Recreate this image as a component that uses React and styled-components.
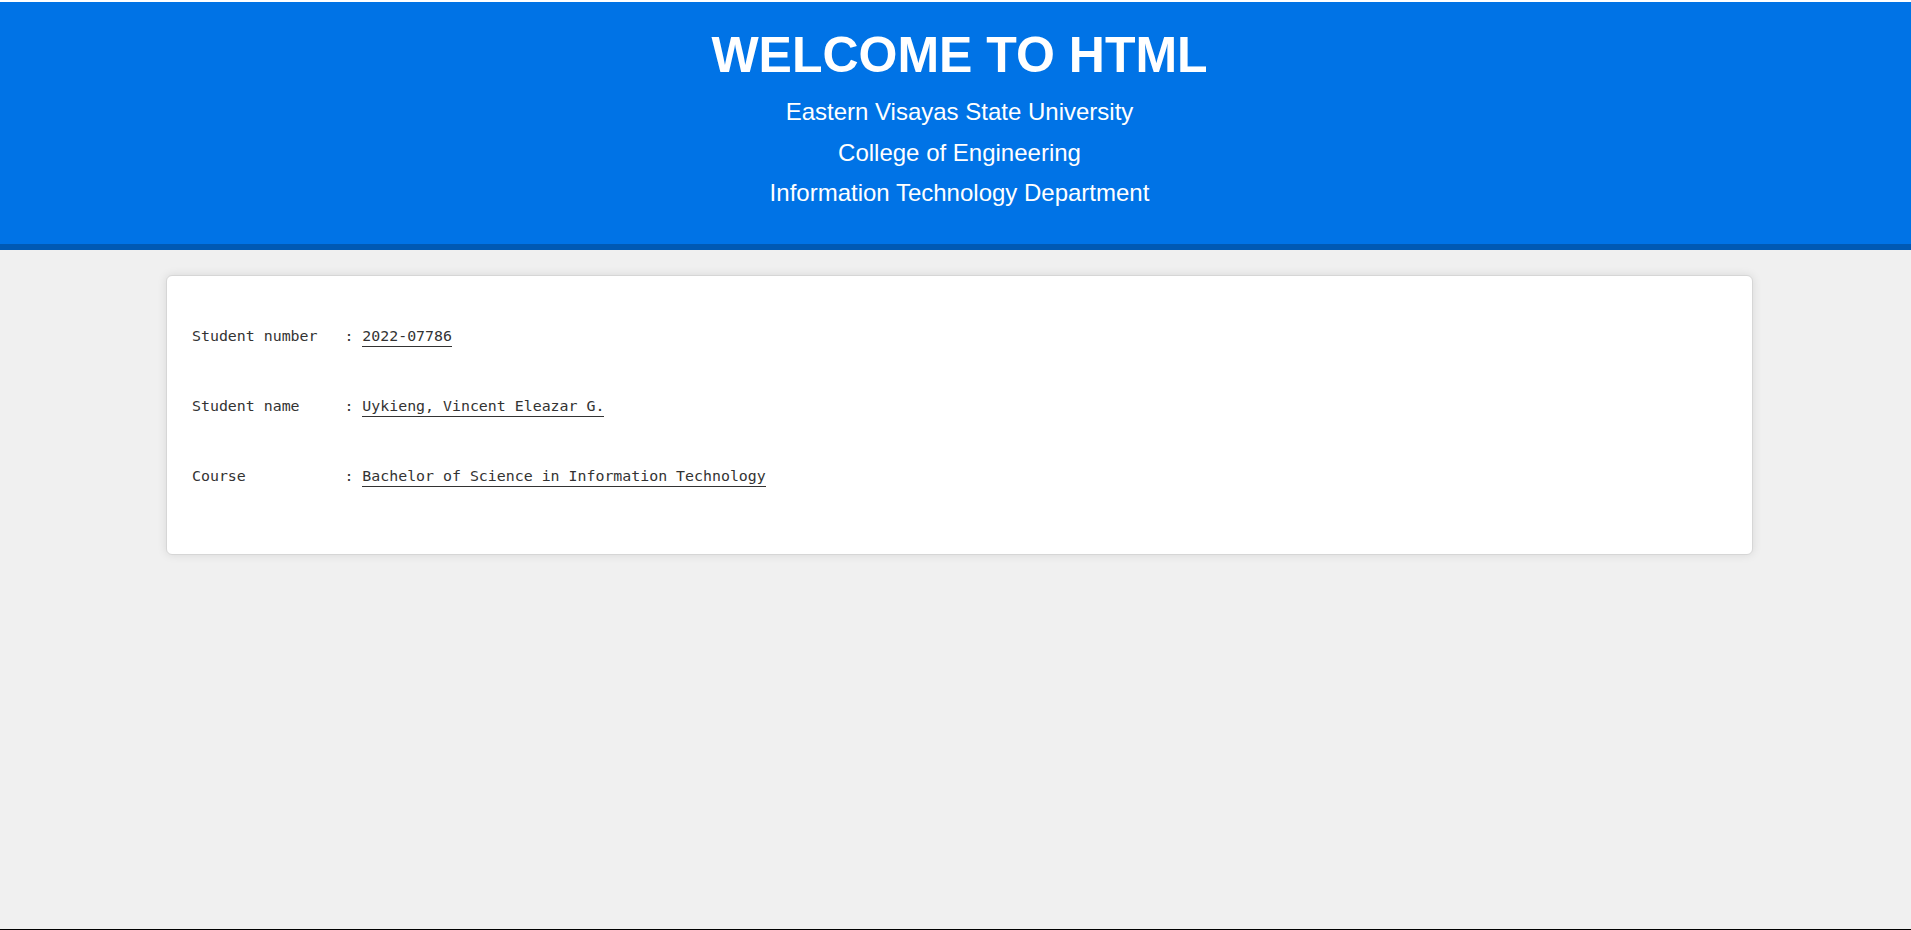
import React from "react";
import styled, { createGlobalStyle } from "styled-components";

const GlobalStyle = createGlobalStyle`
  html, body {
    margin: 0;
    padding: 0;
    background: #f0f0f0;
  }
  body {
    font-family: "Liberation Sans", Arial, sans-serif;
  }
  * { box-sizing: border-box; }
`;

const Page = styled.div`
  min-height: 100vh;
  background: #f0f0f0;
  border-top: 2px solid #ffffff;
  border-bottom: 1px solid #000000;
  display: flex;
  flex-direction: column;
`;

const Header = styled.header`
  background: #0073e6;
  border-bottom: 6px solid #0059b3;
  color: #ffffff;
  padding: 23px 0 37px 8px;
  display: flex;
  flex-direction: column;
  align-items: center;
  text-align: center;
  font-family: "Liberation Sans", Arial, sans-serif;
`;

const Title = styled.h1`
  margin: 0 0 13px;
  font-size: 50px;
  line-height: 60px;
  font-weight: 700;
`;

const Subtitles = styled.div`
  display: flex;
  flex-direction: column;
  align-items: center;
  gap: 12.5px;
`;

const Subtitle = styled.p`
  margin: 0;
  font-size: 24px;
  line-height: 28px;
  font-weight: 400;
`;

const Main = styled.main`
  padding: 25px 0 0 8px;
  display: flex;
  justify-content: center;
`;

const Card = styled.section`
  width: 100%;
  max-width: 1587px;
  background: #ffffff;
  border: 1px solid #d6d6d6;
  border-radius: 6px;
  box-shadow: 0 0 10px rgba(0, 0, 0, 0.1);
  padding: 50px 25px 67px;
  display: flex;
  flex-direction: column;
  gap: 49px;
  font-family: "DejaVu Sans Mono", "Liberation Mono", monospace;
  font-size: 14.9px;
  line-height: 20px;
  color: #333333;
`;

const Row = styled.div`
  display: flex;
  white-space: pre;
`;

const Label = styled.span`
  width: 17ch;
  flex: none;
`;

const Colon = styled.span`
  flex: none;
`;

const Value = styled.span`
  border-bottom: 1px solid #333333;
`;

const rows = [
  { label: "Student number", value: "2022-07786" },
  { label: "Student name", value: "Uykieng, Vincent Eleazar G." },
  { label: "Course", value: "Bachelor of Science in Information Technology" },
];

export default function App() {
  return (
    <>
      <GlobalStyle />
      <Page>
        <Header>
          <Title>WELCOME TO HTML</Title>
          <Subtitles>
            <Subtitle>Eastern Visayas State University</Subtitle>
            <Subtitle>College of Engineering</Subtitle>
            <Subtitle>Information Technology Department</Subtitle>
          </Subtitles>
        </Header>
        <Main>
          <Card>
            {rows.map((r) => (
              <Row key={r.label}>
                <Label>{r.label}</Label>
                <Colon>{": "}</Colon>
                <Value>{r.value}</Value>
              </Row>
            ))}
          </Card>
        </Main>
      </Page>
    </>
  );
}
